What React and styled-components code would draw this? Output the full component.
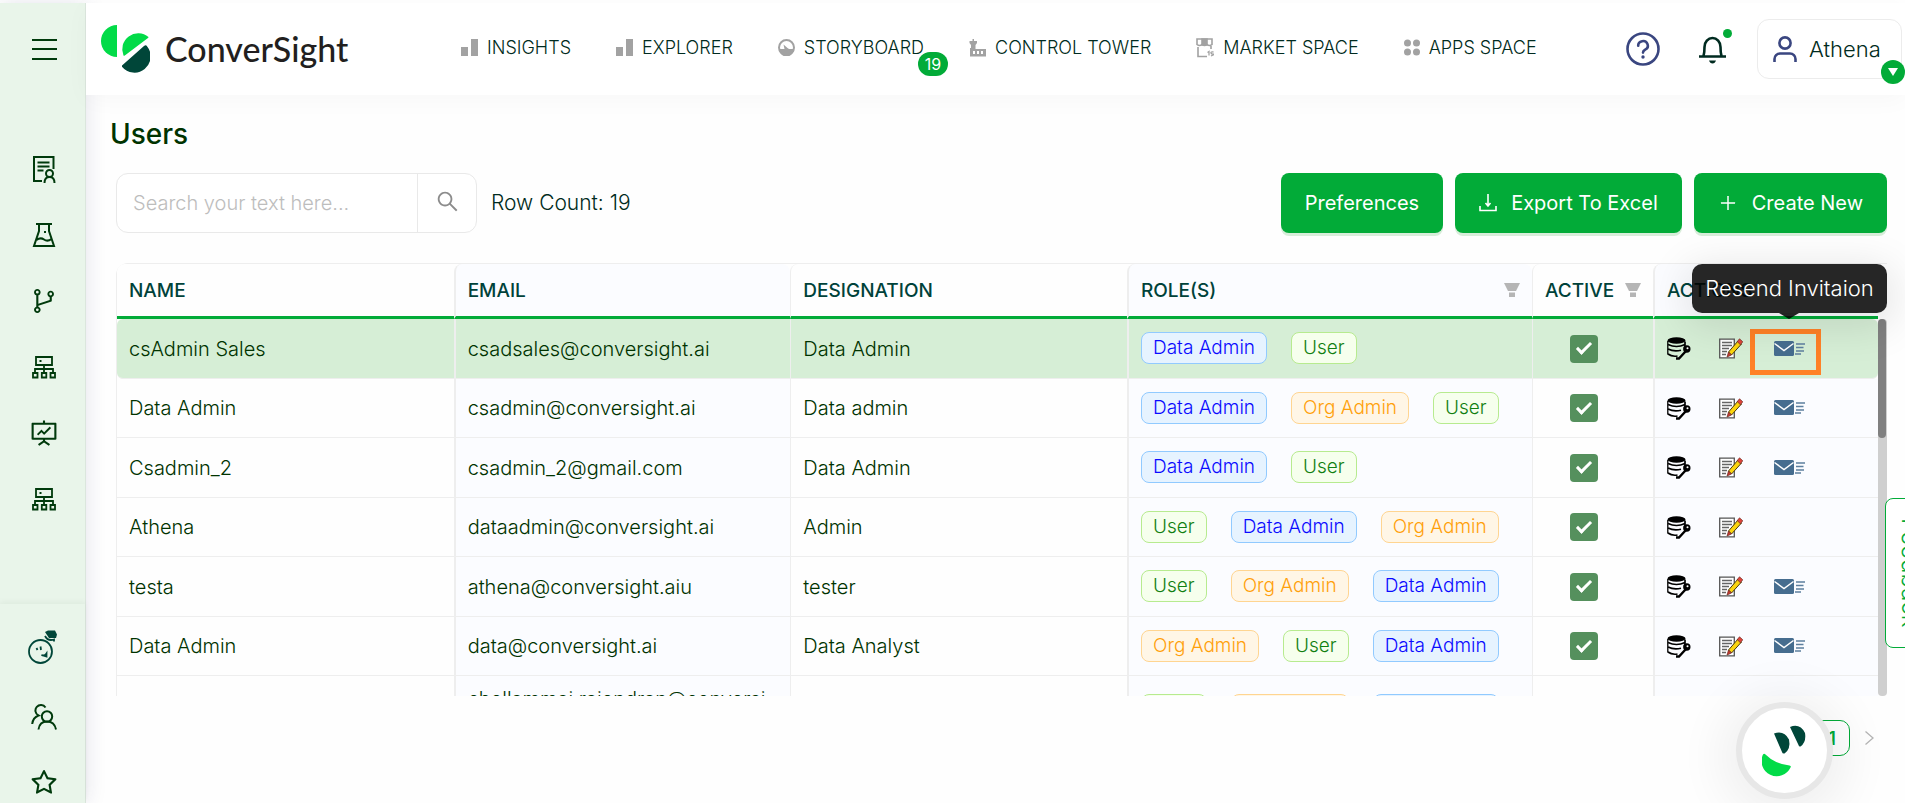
import React from "react";
import styled, { createGlobalStyle, css } from "styled-components";
import {
  AiOutlineBranches,
  AiOutlineFundProjectionScreen,
  AiOutlineStar,
  AiOutlineSearch,
  AiOutlinePlus,
} from "react-icons/ai";

const GlobalStyle = createGlobalStyle`
  *, *::before, *::after { box-sizing: border-box; }
  body {
    margin: 0;
    background: #fff;
    color: #002b20;
    font-family: Inter, "Liberation Sans", sans-serif;
    font-weight: 300;
    overflow: hidden;
  }
  button, input { font: inherit; color: inherit; }
  button { cursor: pointer; }
  a { color: inherit; text-decoration: none; }
  svg { display: block; flex: none; }
`;

const green = "#02ab38";
const line = "#eeeeee";

/* ---------- frame ---------- */

const Shell = styled.div`
  display: flex;
  height: 100vh;
  padding-top: 3px;
  overflow: hidden;
`;

const Sidebar = styled.aside`
  display: flex;
  flex-direction: column;
  flex: none;
  width: 86px;
  background: #e9f5ea;
  border-right: 1px solid #dbe6dd;
  box-shadow: 0 0 20px rgba(30, 30, 90, 0.12);
  color: #003a0c;
  z-index: 2;
`;

const SideGroup = styled.nav`
  display: flex;
  flex-direction: column;
  flex: ${(p) => (p.$grow ? 1 : "none")};
`;

const SideFooter = styled(SideGroup)`
  padding-top: 14px;
  height: 199px;
  box-shadow: 0 -2px 6px rgba(0, 40, 0, 0.05);
`;

const SideLink = styled.a`
  display: flex;
  flex: none;
  align-items: center;
  justify-content: center;
  width: 88px;
  height: 66px;
`;

const MenuButton = styled.button`
  display: flex;
  align-items: center;
  justify-content: center;
  width: 88px;
  height: 92px;
  margin-bottom: 41px;
  padding: 0;
  border: 0;
  background: none;
`;

const Main = styled.main`
  display: flex;
  flex-direction: column;
  flex: 1;
  min-width: 0;
`;

/* ---------- header ---------- */

const Header = styled.header`
  display: flex;
  flex: none;
  align-items: center;
  height: 92px;
  padding: 0 3px 0 14px;
  background: #fff;
  box-shadow: 0 4px 24px rgba(0, 0, 0, 0.03);
  z-index: 3;
`;

const Brand = styled.a`
  display: flex;
  align-items: center;
  gap: 15px;
  width: 361px;
  font-family: Lato, sans-serif;
  font-size: 34px;
  font-weight: 500;
  line-height: 48px;
  color: #221f20;
`;

const TopNav = styled.nav`
  display: flex;
  gap: 45px;
  padding-bottom: 3px;
`;

const TopLink = styled.a`
  position: relative;
  display: flex;
  align-items: center;
  gap: 9px;
  font-size: 18px;
  line-height: 24px;
  white-space: nowrap;
  svg { color: #a2a2a2; }
`;

const CountBadge = styled.span`
  position: absolute;
  right: -24px;
  top: 16px;
  width: 30px;
  border-radius: 12px;
  background: ${green};
  color: #fff;
  font-size: 16px;
  font-weight: 400;
  line-height: 24px;
  text-align: center;
`;

const HeaderTools = styled.div`
  display: flex;
  align-items: center;
  gap: 39px;
  margin-left: auto;
`;

const IconButton = styled.button`
  position: relative;
  display: flex;
  padding: 0;
  border: 0;
  background: none;
  color: ${(p) => p.$color};
`;

const Dot = styled.span`
  position: absolute;
  right: -6px;
  top: -5px;
  width: 9px;
  height: 9px;
  border-radius: 50%;
  background: ${green};
`;

const UserButton = styled.button`
  position: relative;
  display: flex;
  align-items: center;
  gap: 12px;
  width: 145px;
  height: 60px;
  margin-left: -8px;
  padding: 0 15px;
  border: 1px solid #ececec;
  border-radius: 12px;
  background: #fff;
  font-size: 22px;
  white-space: nowrap;
`;

const Caret = styled.span`
  position: absolute;
  right: -4px;
  bottom: -6px;
  display: flex;
  align-items: center;
  justify-content: center;
  width: 24px;
  height: 24px;
  border-radius: 50%;
  background: ${green};
  color: #fff;
`;

/* ---------- page ---------- */

const Page = styled.section`
  display: flex;
  flex-direction: column;
  flex: 1;
  min-height: 0;
  padding: 20px 18px 0 30px;
  background: #fefefe;
`;

const Title = styled.h1`
  margin: 0 0 20px -6px;
  font-size: 28px;
  font-weight: 500;
  line-height: 38px;
  color: #003300;
`;

const Toolbar = styled.div`
  display: flex;
  align-items: center;
  gap: 12px;
  margin-bottom: 30px;
`;

const SearchForm = styled.form`
  display: flex;
  width: 361px;
  height: 60px;
  margin-right: 2px;
  border: 1px solid #e9e9e9;
  border-radius: 12px;
  background: #fff;
  overflow: hidden;
`;

const SearchInput = styled.input`
  flex: 1;
  min-width: 0;
  padding: 0 16px;
  border: 0;
  outline: 0;
  background: none;
  font-size: 20px;
  &::placeholder { color: #bdbdbd; }
`;

const SearchButton = styled.button`
  display: flex;
  align-items: center;
  justify-content: center;
  width: 59px;
  padding: 0 0 4px;
  border: 0;
  border-left: 1px solid #e9e9e9;
  background: none;
  color: #8c8c8c;
`;

const RowCount = styled.span`
  margin-right: auto;
  font-size: 21px;
  line-height: 24px;
`;

const PrimaryButton = styled.button`
  display: flex;
  align-items: center;
  justify-content: center;
  gap: 14px;
  height: 60px;
  padding: 0 24px;
  border: 0;
  border-radius: 8px;
  background: ${green};
  box-shadow: 0 3px 0 #d8edda;
  color: #fff;
  font-size: 20px;
  font-weight: 400;
  white-space: nowrap;
`;

/* ---------- table ---------- */

const GridFrame = styled.div`
  position: relative;
  display: flex;
  flex: 1;
  min-height: 0;
  border: solid ${line};
  border-width: 1px 0 0 1px;
  border-radius: 12px 0 0 0;
`;

const Scroller = styled.div`
  flex: 1;
  min-width: 0;
  overflow: hidden;
`;

const Table = styled.table`
  width: 100%;
  table-layout: fixed;
  border-collapse: separate;
  border-spacing: 0;
`;

const Col = styled.col`
  width: ${(p) => p.$width || "auto"};
`;

const tinted = css`
  background: ${(p) => (p.$tint ? "#fbfcff" : "#fefefe")};
  border-left: ${(p) => (p.$first ? 0 : p.$tint ? 2 : 1)}px solid ${line};
`;

const HeadCell = styled.th`
  ${tinted}
  height: 55px;
  padding: 0 12px;
  border-bottom: 3px solid ${green};
  border-radius: 8px 8px 0 0;
  color: #00423a;
  font-size: 19px;
  font-weight: 500;
  text-align: left;
`;

const HeadLabel = styled.span`
  display: flex;
  align-items: center;
  justify-content: space-between;
  svg { color: #b5b5b5; }
`;

const Cell = styled.td`
  ${tinted}
  height: 59px;
  padding: 0 12px;
  border-bottom: 1px solid ${line};
  overflow: hidden;
  color: #003300;
  font-size: 20px;
  line-height: 24px;
  white-space: nowrap;
  overflow-wrap: anywhere;
`;

const Row = styled.tr`
  &:nth-child(odd) > td { height: 60px; }
  ${(p) =>
    p.$selected &&
    css`
      & > td { background: #d6eed6; }
      & > td:first-child { border-radius: 6px 0 0 6px; }
      & > td:last-child { border-radius: 0 6px 6px 0; }
    `}
  ${(p) =>
    p.$tall &&
    css`
      & > td { padding: 10px 16px 0 12px; white-space: normal; }
    `}
`;

const Tags = styled.div`
  display: flex;
  gap: 24px;
  margin-bottom: 1px;
  white-space: nowrap;
`;

const tagColors = {
  "Data Admin": { fill: "#e6f3ff", edge: "#91caff", text: "#0a0aff" },
  User: { fill: "#f6ffed", edge: "#b7eb8f", text: "#118011" },
  "Org Admin": { fill: "#fff6e6", edge: "#ffd591", text: "#ffa00a" },
};

const Tag = styled.span`
  padding: 0 11px;
  border: 1px solid ${(p) => tagColors[p.$role].edge};
  border-radius: 8px;
  background: ${(p) => tagColors[p.$role].fill};
  color: ${(p) => tagColors[p.$role].text};
  font-size: 19px;
  line-height: 30px;
`;

const Check = styled.input.attrs({ type: "checkbox" })`
  appearance: none;
  display: flex;
  align-items: center;
  justify-content: center;
  width: 28px;
  height: 28px;
  margin: 0 0 0 25px;
  border-radius: 4px;
  background: #55905d;
  &:checked::after {
    content: "";
    width: 8px;
    height: 15px;
    margin-bottom: 4px;
    border: solid #fff;
    border-width: 0 3px 3px 0;
    transform: rotate(45deg);
  }
`;

const Actions = styled.div`
  display: flex;
  align-items: center;
  gap: 28px;
`;

const ActionButton = styled.button`
  display: flex;
  margin-left: ${(p) => (p.$apart ? 3 : 0)}px;
  padding: 0;
  border: 0;
  background: none;
`;

const Highlight = styled.span`
  position: absolute;
  right: 66px;
  top: 65px;
  width: 71px;
  height: 46px;
  border: 5px solid #ff8127;
`;

const Track = styled.div`
  flex: none;
  width: 9px;
  margin-top: 55px;
  border-radius: 4px;
  background: #cfcfcf;
`;

const Thumb = styled.div`
  width: 8px;
  height: 119px;
  border-radius: 4px;
  background: #808080;
`;

const Tooltip = styled.div`
  position: absolute;
  right: 0;
  top: 0;
  width: 195px;
  border-radius: 10px;
  background: rgba(0, 0, 0, 0.85);
  box-shadow: 0 8px 40px 6px rgba(0, 0, 0, 0.1);
  color: #fff;
  font-size: 22px;
  font-weight: 300;
  line-height: 49px;
  text-align: center;
  white-space: nowrap;
  &::after {
    content: "";
    position: absolute;
    left: 87px;
    top: 49px;
    border: solid transparent;
    border-width: 6px 10px 0;
    border-top-color: rgba(0, 0, 0, 0.85);
  }
`;

/* ---------- footer and floating parts ---------- */

const Pager = styled.nav`
  display: flex;
  flex: none;
  align-items: flex-start;
  justify-content: flex-end;
  gap: 11px;
  height: 107px;
  padding: 24px 10px 0;
`;

const PageLink = styled.a`
  display: flex;
  align-items: center;
  justify-content: center;
  width: ${(p) => (p.$current ? 36 : 16)}px;
  height: 36px;
  border: ${(p) => (p.$current ? `1px solid ${green}` : 0)};
  border-radius: 10px;
  color: ${(p) => (p.$current ? green : "#b5b5b5")};
  font-size: 18px;
  font-weight: 600;
`;

const FeedbackTab = styled.button`
  position: fixed;
  left: calc(100vw - 20px);
  top: 498px;
  z-index: 4;
  height: 150px;
  padding: 0 10px;
  border: 1px solid ${green};
  border-radius: 8px;
  background: #fff;
  color: ${green};
  font-size: 24px;
  writing-mode: vertical-rl;
`;

const ChatButton = styled.button`
  position: fixed;
  right: 72px;
  bottom: 4px;
  z-index: 5;
  display: flex;
  align-items: center;
  justify-content: center;
  width: 97px;
  height: 97px;
  padding: 0;
  border: 6px solid #e7e7e7;
  border-radius: 50%;
  background: #fff;
  box-shadow: 0 6px 48px 16px rgba(0, 0, 0, 0.06);
`;

/* ---------- drawings ---------- */

const LogoMark = () => (
  <svg width="50" height="48" viewBox="0 0 50 48">
    <path d="M17 0v32A16 16 0 0 1 17 0z" fill="#02db48" />
    <path d="M48.500 12A16 16 0 0 0 23.500 30.500Q24 31 24.800 30.500L48.300 12.800z" fill="#02db48" />
    <path d="M22 40.500L44 21q2-1.500 3 .3a16 16 0 0 1-25 20.400z" fill="#004639" />
  </svg>
);

const Bars = () => (
  <svg width="17" height="17" fill="currentColor">
    <path d="M0 8h7v9H0zM10 0h7v17h-7z" />
  </svg>
);
const Gauge = () => (
  <svg width="17" height="17" viewBox="0 0 17 17">
    <circle cx="8.500" cy="8.500" r="7.500" fill="none" stroke="currentColor" strokeWidth="2" />
    <path d="M1 10h5.500L5.500 5.500 9.500 9 11 10h5a7.500 7.500 0 0 1-15 0z" fill="currentColor" />
  </svg>
);
const Tower = () => (
  <svg width="17" height="18" viewBox="0 0 17 18" fill="currentColor">
    <path fillRule="evenodd" d="M3.500 0h1.500v2h3v2L6.500 6v4H17v7.500H1V9h1V6L.5 4V2h3zM4 12v3h2v-3zM8 12v3h2v-3zM12 12v3h2v-3z" />
  </svg>
);
const Market = () => (
  <svg width="18" height="20" viewBox="0 0 18 20" fill="none" stroke="currentColor" strokeWidth="1.600">
    <path d="M1 1h15v5.500q-2.500 2-5 0-2.500 2-5 0-2.500 2-5 0zM2 9v9.500h9M15 8v3" />
    <path d="M6 1h5v6H6z" fill="currentColor" />
    <path d="M11.500 14.500l1.500-1v4M17.500 14q-3-.5-2.500 1t2.500 1.200-2.500 1.800" strokeWidth="1.300" />
  </svg>
);
const Apps = () => (
  <svg width="16" height="17" fill="currentColor">
    <circle cx="3.500" cy="4" r="3.500" /><circle cx="12.500" cy="4" r="3.500" />
    <circle cx="3.500" cy="13" r="3.500" /><circle cx="12.500" cy="13" r="3.500" />
  </svg>
);

const Burger = () => (
  <svg width="25" height="22" stroke="currentColor" strokeWidth="2">
    <path d="M0 2h25M0 11h25M0 21h25" />
  </svg>
);
const Report = () => (
  <svg width="24" height="28" viewBox="0 0 24 28" fill="none" stroke="currentColor" strokeWidth="2">
    <path d="M10 26H2V2h19.500v12M5.500 7.500h12M5.500 11.500h12M5.500 15.500h6" />
    <circle cx="17.500" cy="18.500" r="3.500" />
    <path d="M12.500 28q0-6 5-6t5 6" />
  </svg>
);
const Flask = () => (
  <svg width="24" height="26" viewBox="0 0 24 26" fill="none" stroke="currentColor" strokeWidth="2">
    <path d="M4 2h16M7 2v7L2 24h20L17 9V2M4.500 18q4-3 7.500-.5t7.500-.5" />
    <path d="M12 10h2" />
  </svg>
);
const Tree = () => (
  <svg width="24" height="24" viewBox="0 0 24 24" fill="none" stroke="currentColor" strokeWidth="1.800">
    <path d="M4 2h16v8H4zM12 10v8M3 18v-4h18v4M1 18h4.500v4.500H1zM9.800 18h4.500v4.500H9.800zM18.500 18H23v4.500h-4.500zM7.500 6h2" />
  </svg>
);
const Bot = () => (
  <svg width="32" height="42" viewBox="0 0 32 42" fill="none" stroke="#004639" strokeWidth="1.800">
    <circle cx="12.500" cy="21.500" r="11.500" />
    <path d="M17 2l3-1.500h7l2 4-1 3.500h-7z" fill="#004639" stroke="none" />
    <path d="M17 6q3 5.500 9 3.500v2M8.500 18l1 2M12.500 16.500l.5 3.500M13.500 25q3 1.500 5-1.500v3z" />
  </svg>
);
const People = () => (
  <svg width="26" height="26" viewBox="0 0 26 26" fill="none" stroke="currentColor" strokeWidth="2">
    <circle cx="16" cy="12.500" r="5.200" />
    <path d="M7.500 25.500q1-8 8.500-8t9 8M14.500 3.500A5.500 5.500 0 1 0 7.500 11.500Q2 13.500 1.200 20" />
  </svg>
);

const Help = () => (
  <svg width="34" height="34" viewBox="0 0 34 34" fill="none" stroke="currentColor" strokeWidth="2.600">
    <circle cx="17" cy="17" r="15.500" />
    <path d="M12.200 13.800a4.800 4.500 0 1 1 7 3.800q-2.200 1.200-2.200 3" strokeLinecap="round" />
    <circle cx="17" cy="25" r="1.700" fill="currentColor" stroke="none" />
  </svg>
);
const Bell = () => (
  <svg width="27" height="30" viewBox="0 0 27 30" fill="none" stroke="currentColor" strokeWidth="2.600">
    <path d="M4.500 22q1-3 1-9a8 9 0 0 1 16 0q0 6 1 9M0 22.500h27" />
    <path d="M10 26.500h7q-1 3-3.500 3t-3.500-3z" fill="currentColor" stroke="none" />
  </svg>
);
const Person = () => (
  <svg width="24" height="26" viewBox="0 0 24 26" fill="none" stroke="#3a4680" strokeWidth="2.600">
    <circle cx="12" cy="7" r="5.600" />
    <path d="M1.500 26v-3a5.500 5.500 0 0 1 5.500-5.500h10a5.500 5.500 0 0 1 5.500 5.500v3" />
  </svg>
);

const Download = () => (
  <svg width="18" height="18" fill="none" stroke="currentColor" strokeWidth="1.600">
    <path d="M9 0v11M6.500 9L9 12l2.500-3M1 12v4.500h16V12" />
  </svg>
);
const Funnel = () => (
  <svg width="16" height="14" fill="currentColor">
    <path d="M0 0h16l-4 8H4zM5 9.500h6V14H5z" />
  </svg>
);

const Database = () => (
  <svg width="24" height="23" viewBox="0 0 24 23" fill="none" stroke="#000" strokeWidth="1.300">
    <ellipse cx="9.500" cy="3.500" rx="9" ry="3.300" fill="#000" stroke="none" />
    <path d="M.8 4v13.500" />
    <path d="M1 7.500q8.500 4 17 0V4.500M1 12q6 3 13 1.200M1 17q4 3 9.500 2M18 7.500v2" strokeWidth="1.700" />
    <path d="M9 21.500h3L19 14" strokeWidth="2.400" />
    <circle cx="19.800" cy="12" r="3.700" fill="#000" stroke="none" />
    <circle cx="20.500" cy="11.200" r="1" fill="#fff" stroke="none" />
  </svg>
);
const Edit = () => (
  <svg width="24" height="21" viewBox="0 0 24 21">
    <path d="M.7 1.200h14.600v18.600H.7z" fill="#fff" stroke="#555" strokeWidth="1.300" />
    <path d="M3 4.500h10M3 7.500h10M3 10.500h7M3 13.500h5M3 16.500h4" stroke="#666" strokeWidth="1.300" />
    <path d="M9.500 14L19 3l3.500 3L12.500 17z" fill="#fbd40c" stroke="#4a3b10" />
    <path d="M18.300 3.500L20.500.8 23.800 3.800l-2.500 3z" fill="#e0453a" stroke="#6b2a22" strokeWidth=".7" />
    <path d="M8 19l1.500-5 3 3z" fill="#c43c30" stroke="#6b2a22" strokeWidth=".7" />
  </svg>
);
const Mail = () => (
  <svg width="31" height="16" viewBox="0 0 31 16">
    <rect width="20" height="15" rx="1.500" fill="#466d8f" />
    <path d="M.5 2.500L10 9.500l9.500-7" fill="none" stroke="#fff" strokeWidth="1.500" />
    <path d="M22 3h9M22 6.500h7.500M22 10h8M21 13h6" stroke="#5d7f9e" strokeWidth="1.500" />
  </svg>
);
const Face = () => (
  <svg width="46" height="52" viewBox="0 0 46 52">
    <path d="M12 8.500Q22 5 27 14.500 29 24 22.500 28.500 20.500 29 20 27z" fill="#004639" />
    <path d="M28 2Q38-2 43 8q1.500 9-4.500 13.500-1.500.5-2-1.500z" fill="#004639" />
    <path d="M1 29.500q1-1.500 2.500 0Q13 39 27.500 40.500q2 .5 1 2A14.500 14.500 0 0 1 1 29.500z" fill="#02db48" />
  </svg>
);
const CaretDown = () => (
  <svg width="10" height="8" fill="currentColor"><path d="M0 0h10L5 8z" /></svg>
);
const Chevron = () => (
  <svg width="9" height="14" fill="none" stroke="currentColor" strokeWidth="1.300"><path d="M.5.5L8 7 .5 13.500" /></svg>
);

/* ---------- data ---------- */

const topLinks = [
  ["INSIGHTS", Bars],
  ["EXPLORER", Bars],
  ["STORYBOARD", Gauge, "19"],
  ["CONTROL TOWER", Tower],
  ["MARKET SPACE", Market],
  ["APPS SPACE", Apps],
];

const D = "Data Admin";
const U = "User";
const O = "Org Admin";

const users = [
  ["csAdmin Sales", "csadsales@conversight.ai", "Data Admin", [D, U], true],
  ["Data Admin", "csadmin@conversight.ai", "Data admin", [D, O, U], true],
  ["Csadmin_2", "csadmin_2@gmail.com", "Data Admin", [D, U], true],
  ["Athena", "dataadmin@conversight.ai", "Admin", [U, D, O], false],
  ["testa", "athena@conversight.aiu", "tester", [U, O, D], true],
  ["Data Admin", "data@conversight.ai", "Data Analyst", [O, U, D], true],
  ["", "chellammai.rajendran@conversight.ai", "", [U, O, D], true],
];

const UserRow = ({ user, selected, tall }) => {
  const [name, email, designation, roles, canResend] = user;
  return (
    <Row $selected={selected} $tall={tall}>
      <Cell $first>{name}</Cell>
      <Cell $tint>{email}</Cell>
      <Cell>{designation}</Cell>
      <Cell $tint>
        <Tags>{roles.map((r) => <Tag key={r} $role={r}>{r}</Tag>)}</Tags>
      </Cell>
      <Cell><Check defaultChecked aria-label="Active" /></Cell>
      <Cell $tint>
        <Actions>
          <ActionButton aria-label="Data access"><Database /></ActionButton>
          <ActionButton aria-label="Edit"><Edit /></ActionButton>
          {canResend && (
            <ActionButton $apart aria-label="Resend invitation">
              <Mail />
            </ActionButton>
          )}
        </Actions>
      </Cell>
    </Row>
  );
};

export default function App() {
  return (
    <>
      <GlobalStyle />
      <Shell>
        <Sidebar>
          <MenuButton aria-label="Menu"><Burger /></MenuButton>
          <SideGroup $grow>
            <SideLink href="#reports" aria-label="Reports"><Report /></SideLink>
            <SideLink href="#lab" aria-label="Lab"><Flask /></SideLink>
            <SideLink href="#flows" aria-label="Flows"><AiOutlineBranches size={30} /></SideLink>
            <SideLink href="#connect" aria-label="Connectors"><Tree /></SideLink>
            <SideLink href="#present" aria-label="Presentations"><AiOutlineFundProjectionScreen size={30} /></SideLink>
            <SideLink href="#sources" aria-label="Sources"><Tree /></SideLink>
          </SideGroup>
          <SideFooter>
            <SideLink href="#athena" aria-label="Athena"><Bot /></SideLink>
            <SideLink href="#users" aria-label="Users"><People /></SideLink>
            <SideLink href="#favorites" aria-label="Favorites"><AiOutlineStar size={30} /></SideLink>
          </SideFooter>
        </Sidebar>

        <Main>
          <Header>
            <Brand href="#home"><LogoMark />ConverSight</Brand>
            <TopNav>
              {topLinks.map(([label, Icon, count]) => (
                <TopLink key={label} href="#nav">
                  <Icon />
                  {label}
                  {count && <CountBadge>{count}</CountBadge>}
                </TopLink>
              ))}
            </TopNav>
            <HeaderTools>
              <IconButton $color="#3a4680" aria-label="Help"><Help /></IconButton>
              <IconButton $color="#002b20" aria-label="Notifications"><Bell /><Dot /></IconButton>
              <UserButton><Person />Athena<Caret><CaretDown /></Caret></UserButton>
            </HeaderTools>
          </Header>

          <Page>
            <Title>Users</Title>
            <Toolbar>
              <SearchForm>
                <SearchInput aria-label="Search" placeholder="Search your text here..." />
                <SearchButton type="button" aria-label="Search"><AiOutlineSearch size={25} /></SearchButton>
              </SearchForm>
              <RowCount>Row Count: 19</RowCount>
              <PrimaryButton>Preferences</PrimaryButton>
              <PrimaryButton><Download />Export To Excel</PrimaryButton>
              <PrimaryButton><AiOutlinePlus size={20} />Create New</PrimaryButton>
            </Toolbar>

            <GridFrame>
              <Scroller>
                <Table>
                  <colgroup>
                    <Col /><Col /><Col />
                    <Col $width="23%" /><Col $width="121px" /><Col $width="225px" />
                  </colgroup>
                  <thead>
                    <tr>
                      <HeadCell $first>NAME</HeadCell>
                      <HeadCell $tint>EMAIL</HeadCell>
                      <HeadCell>DESIGNATION</HeadCell>
                      <HeadCell $tint><HeadLabel>ROLE(S)<Funnel /></HeadLabel></HeadCell>
                      <HeadCell><HeadLabel>ACTIVE<Funnel /></HeadLabel></HeadCell>
                      <HeadCell $tint>ACTIONS</HeadCell>
                    </tr>
                  </thead>
                  <tbody>
                    {users.map((u, i) => (
                      <UserRow key={u[1]} user={u} selected={i === 0} tall={i === 6} />
                    ))}
                  </tbody>
                </Table>
              </Scroller>
              <Track><Thumb /></Track>
              <Highlight />
              <Tooltip role="tooltip">Resend Invitaion</Tooltip>
            </GridFrame>

            <Pager aria-label="Pagination">
              <PageLink $current href="#page-1">1</PageLink>
              <PageLink href="#next" aria-label="Next page"><Chevron /></PageLink>
            </Pager>
          </Page>
        </Main>
      </Shell>
      <FeedbackTab>Feedback</FeedbackTab>
      <ChatButton aria-label="Chat"><Face /></ChatButton>
    </>
  );
}
